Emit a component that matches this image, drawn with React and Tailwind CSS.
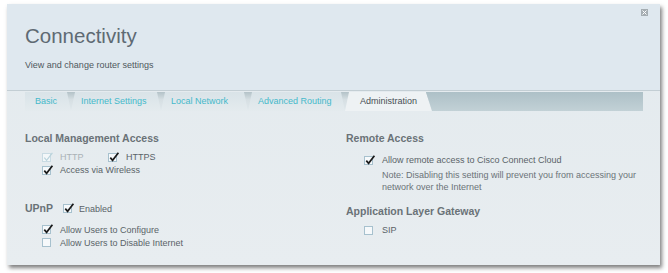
import React from 'react';

const font = { fontFamily: '"Liberation Sans", Arial, sans-serif' };

const Check = ({ checked, disabled }) => (
  <span
    className={`relative inline-block w-[9px] h-[9px] shrink-0 border ${
      disabled ? 'border-[#c9dbe3] bg-[#f3f7f9]' : 'border-[#a7c1ce] bg-[#f6f9fb]'
    }`}
  >
    {checked && (
      <svg
        className="absolute left-[0px] top-[-2px] overflow-visible"
        width="10"
        height="10"
        viewBox="0 0 10 10"
      >
        <path
          d="M1.3 5.6 L3.6 8.3 L9.4 0.8"
          fill="none"
          stroke={disabled ? '#b9d3dc' : '#1a1a1a'}
          strokeWidth={disabled ? 1.2 : 1.7}
        />
      </svg>
    )}
  </span>
);

const Item = ({ checked, disabled, children, className = '' }) => (
  <div className={`flex items-center h-[12px] ${className}`}>
    <Check checked={checked} disabled={disabled} />
    <span
      className={`ml-[9px] text-[9px] leading-[12px] whitespace-nowrap ${
        disabled ? 'text-[#aab2b6]' : 'text-[#5a6368]'
      }`}
    >
      {children}
    </span>
  </div>
);

const Heading = ({ children }) => (
  <div className="text-[10.5px] leading-[13px] font-bold text-[#6a7277]">{children}</div>
);

const tabs = [
  { label: 'Basic', w: 'w-[46px]', clip: '[clip-path:polygon(0_0,calc(100%-4px)_0,100%_100%,0_100%)]' },
  { label: 'Internet Settings', w: 'w-[90px]', clip: '[clip-path:polygon(4px_0,calc(100%-4px)_0,100%_100%,0_100%)]' },
  { label: 'Local Network', w: 'w-[87px]', clip: '[clip-path:polygon(4px_0,calc(100%-4px)_0,100%_100%,0_100%)]' },
  { label: 'Advanced Routing', w: 'w-[97px]', clip: '[clip-path:polygon(4px_0,calc(100%-4px)_0,100%_100%,0_100%)]' },
];

export default function App() {
  return (
    <div className="w-[668px] h-[273px] bg-white overflow-hidden pt-[4px] pl-[7px]" style={font}>
      <div className="relative w-[653px] h-[261px] bg-gradient-to-b from-[#e3eaee] to-[#e8edf0] shadow-[2px_3px_4px_rgba(0,0,0,0.5)]">
        {/* Header */}
        <div className="h-[87px] bg-[#dfe8ef] border-b border-[#c3ced4] pl-[18px] pt-[20px]">
          <div className="text-[20.5px] leading-[24px] text-[#5e6a73]">Connectivity</div>
          <div className="mt-[11.5px] text-[9px] leading-[11px] text-[#4f585d]">
            View and change router settings
          </div>
        </div>
        <div className="absolute top-[5px] right-[12px] w-[7px] h-[7px] bg-[#a5adb2] flex items-center justify-center">
          <svg width="5" height="5" viewBox="0 0 5 5">
            <path d="M0.5 0.5 L4.5 4.5 M4.5 0.5 L0.5 4.5" stroke="#fff" strokeWidth="1" />
          </svg>
        </div>

        {/* Tabs */}
        <div className="ml-[18px] mt-[1px] w-[618px] h-[19px] flex bg-gradient-to-b from-[#b3c2c8] via-[#d6dfe3] via-40% to-[#e0e8ec]">
          {tabs.map((t) => (
            <div
              key={t.label}
              className={`${t.w} ${t.clip} h-full flex items-center pl-[10px] bg-gradient-to-b from-[#d9e3e8] to-[#e4ebee] text-[9px] text-[#45b9ca] whitespace-nowrap`}
            >
              {t.label}
            </div>
          ))}
          <div className="w-[87px] h-full flex items-center pl-[15px] bg-[#eef2f4] text-[9px] text-[#474e53] whitespace-nowrap [clip-path:polygon(4px_0,calc(100%-6px)_0,100%_100%,0_100%)]">
            Administration
          </div>
          <div className="-ml-[6px] flex-1 h-full bg-gradient-to-b from-[#adc0c7] to-[#c2d1d6] [clip-path:polygon(0_0,100%_0,100%_100%,6px_100%)]" />
        </div>

        {/* Content */}
        <div className="flex mt-[21px] pl-[18px]">
          <div className="w-[321px]">
            <Heading>Local Management Access</Heading>
            <div className="pl-[17px] mt-[6px]">
              <div className="flex">
                <Item checked disabled className="w-[66px]">HTTP</Item>
                <Item checked>HTTPS</Item>
              </div>
              <Item checked className="mt-[1px]">Access via Wireless</Item>
            </div>
            <div className="mt-[26px] flex items-center h-[13px]">
              <Heading>UPnP</Heading>
              <div className="ml-[10px]">
                <Item checked>
                  <span className="-ml-[2px]">Enabled</span>
                </Item>
              </div>
            </div>
            <div className="pl-[17px] mt-[8.5px]">
              <Item checked>Allow Users to Configure</Item>
              <Item className="mt-[1px]">Allow Users to Disable Internet</Item>
            </div>
          </div>
          <div className="flex-1">
            <Heading>Remote Access</Heading>
            <div className="pl-[18px] mt-[9px]">
              <Item checked>Allow remote access to Cisco Connect Cloud</Item>
              <div className="pl-[18px] mt-[3px] w-[290px] text-[9px] leading-[12px] text-[#6b7378]">
                Note: Disabling this setting will prevent you from accessing your network over the Internet
              </div>
            </div>
            <div className="mt-[11.5px]">
              <Heading>Application Layer Gateway</Heading>
            </div>
            <div className="pl-[18px] mt-[6.5px]">
              <Item>SIP</Item>
            </div>
          </div>
        </div>
      </div>
    </div>
  );
}
